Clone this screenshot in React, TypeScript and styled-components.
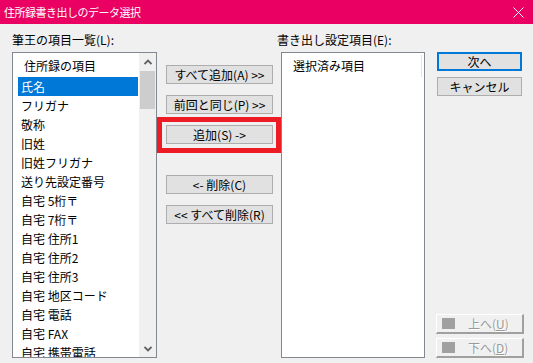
import React from "react";
import styled, { createGlobalStyle } from "styled-components";

const GlobalStyle = createGlobalStyle`
  html, body { margin: 0; padding: 0; background: #f0f0f0; overflow: hidden; }
  * { box-sizing: border-box; }
  body { font-family: "Noto Sans CJK JP", "Noto Sans", sans-serif; }
`;

const Window = styled.div`
  width: 533px;
  height: 363px;
  background: #f0f0f0;
  display: flex;
  flex-direction: column;
  font-family: "Noto Sans CJK JP", "Noto Sans", sans-serif;
  font-size: 12px;
  color: #000;
`;

const TitleBar = styled.div`
  height: 24px;
  background: #ea0062;
  display: flex;
  align-items: center;
  justify-content: space-between;
  padding: 0 9px 0 4px;
`;

const Title = styled.span`
  color: #fff;
  font-size: 11px;
  letter-spacing: -0.5px;
  line-height: 24px;
`;

const Body = styled.div`
  display: grid;
  grid-template-columns: 145px 124px 144px 99px;
  grid-template-rows: 28px 306px;
  padding: 0 9px 5px 12px;
`;

const FieldLabel = styled.div<{ $shift?: number }>`
  padding-top: 8px;
  line-height: 16px;
  font-size: 12px;
  white-space: nowrap;
  margin-left: ${(p) => p.$shift ?? 0}px;
`;

const ListBox = styled.div<{ $ghost?: boolean }>`
  position: relative;
  height: 306px;
  border: 1px solid #828790;
  background: #fff;
  display: flex;
  overflow: hidden;
  &::after {
    content: "";
    display: ${(p) => (p.$ghost ? "block" : "none")};
    position: absolute;
    right: 2px;
    top: 2px;
    width: 1px;
    height: 22px;
    background: #e3e3e3;
  }
`;

const Items = styled.div<{ $inset: number }>`
  flex: 1;
  min-width: 0;
  padding: 3px 1px 0 ${(p) => p.$inset}px;
  overflow: hidden;
`;

const Row = styled.div<{ $selected?: boolean; $header?: boolean }>`
  height: 19px;
  line-height: 19px;
  padding-left: ${(p) => (p.$header ? 6 : 3)}px;
  margin-bottom: ${(p) => (p.$header ? 2 : 0)}px;
  white-space: nowrap;
  background: ${(p) => (p.$selected ? "#0078d7" : "transparent")};
  color: ${(p) => (p.$selected ? "#fff" : "#000")};
`;

const ScrollBar = styled.div`
  width: 17px;
  background: #f0f0f0;
  display: flex;
  flex-direction: column;
`;

const ArrowButton = styled.div`
  height: 17px;
  display: flex;
  align-items: center;
  justify-content: center;
`;

const Thumb = styled.div`
  height: 38px;
  margin: 1px 1px 0;
  background: #cdcdcd;
`;

const Track = styled.div`
  flex: 1;
`;

const MidColumn = styled.div`
  display: flex;
  flex-direction: column;
  align-items: flex-start;
  padding-top: 13px;
`;

const ActionButton = styled.div<{ $gap?: number }>`
  width: 107px;
  height: 19px;
  margin-left: 9px;
  margin-top: ${(p) => p.$gap ?? 0}px;
  border: 1px solid #adadad;
  background: #e1e1e1;
  text-align: center;
  line-height: 17px;
  font-size: 12px;
  white-space: nowrap;
`;

const HighlightBox = styled.div`
  width: 124px;
  margin-top: 3px;
  border: 5px solid #ed1c24;
  padding: 3px 3px 4px 4px;
  & > div {
    margin-left: 0;
  }
`;

const SideColumn = styled.div`
  display: flex;
  flex-direction: column;
  justify-content: space-between;
  padding-left: 11px;
  height: 306px;
`;

const Group = styled.div<{ $gap: number }>`
  display: flex;
  flex-direction: column;
  gap: ${(p) => p.$gap}px;
`;

const DialogButton = styled.div<{ $primary?: boolean }>`
  width: 85px;
  height: 19px;
  margin-left: 1px;
  border: ${(p) => (p.$primary ? "2px solid #0078d7" : "1px solid #adadad")};
  background: #e1e1e1;
  text-align: center;
  line-height: ${(p) => (p.$primary ? 15 : 17)}px;
  font-size: 12px;
`;

const MoveButton = styled.div`
  width: 88px;
  height: 20px;
  background: #f0f0f0;
  border-top: 1px solid #ffffff;
  border-left: 1px solid #ffffff;
  border-right: 2px solid #a0a0a0;
  border-bottom: 2px solid #a0a0a0;
  display: flex;
  align-items: center;
  padding-left: 5px;
`;

const MoveIcon = styled.span`
  width: 13px;
  height: 11px;
  background: #a0a0a0;
  flex: none;
`;

const MoveText = styled.span`
  margin-left: 13px;
  color: #9a9a9a;
  font-size: 12px;
  line-height: 16px;
  text-shadow: 1px 1px 0 #ffffff;
  u { text-decoration: underline; }
`;

const Chevron = ({ up }: { up?: boolean }) => (
  <svg width="8" height="6" viewBox="0 0 8 6">
    <polyline
      points={up ? "0.5,5 4,1.5 7.5,5" : "0.5,1 4,4.5 7.5,1"}
      fill="none"
      stroke="#606060"
      strokeWidth="1.8"
    />
  </svg>
);

const CloseIcon = () => (
  <svg width="11" height="11" viewBox="0 0 11 11">
    <path d="M0.5 0.5 L10.5 10.5 M10.5 0.5 L0.5 10.5" stroke="#fff" strokeWidth="1" />
  </svg>
);

const fields = [
  "氏名",
  "フリガナ",
  "敬称",
  "旧姓",
  "旧姓フリガナ",
  "送り先設定番号",
  "自宅 5桁〒",
  "自宅 7桁〒",
  "自宅 住所1",
  "自宅 住所2",
  "自宅 住所3",
  "自宅 地区コード",
  "自宅 電話",
  "自宅 FAX",
  "自宅 携帯電話",
];

export default function App() {
  return (
    <>
      <GlobalStyle />
      <Window>
        <TitleBar>
          <Title>住所録書き出しのデータ選択</Title>
          <CloseIcon />
        </TitleBar>
        <Body>
          <FieldLabel>筆王の項目一覧(L):</FieldLabel>
          <div />
          <FieldLabel $shift={-4}>書き出し設定項目(E):</FieldLabel>
          <div />

          <ListBox>
            <Items $inset={5}>
              <Row $header>住所録の項目</Row>
              {fields.map((f, i) => (
                <Row key={f} $selected={i === 0}>
                  {f}
                </Row>
              ))}
            </Items>
            <ScrollBar>
              <ArrowButton>
                <Chevron up />
              </ArrowButton>
              <Thumb />
              <Track />
              <ArrowButton>
                <Chevron />
              </ArrowButton>
            </ScrollBar>
          </ListBox>

          <MidColumn>
            <ActionButton>すべて追加(A) &gt;&gt;</ActionButton>
            <ActionButton $gap={11}>前回と同じ(P) &gt;&gt;</ActionButton>
            <HighlightBox>
              <ActionButton>追加(S) -&gt;</ActionButton>
            </HighlightBox>
            <ActionButton $gap={22}>&lt;- 削除(C)</ActionButton>
            <ActionButton $gap={11}>&lt;&lt; すべて削除(R)</ActionButton>
          </MidColumn>

          <ListBox $ghost>
            <Items $inset={5}>
              <Row $header>選択済み項目</Row>
            </Items>
          </ListBox>

          <SideColumn>
            <Group $gap={6}>
              <DialogButton $primary>次へ</DialogButton>
              <DialogButton>キャンセル</DialogButton>
            </Group>
            <Group $gap={4}>
              <MoveButton>
                <MoveIcon />
                <MoveText>
                  上へ(<u>U</u>)
                </MoveText>
              </MoveButton>
              <MoveButton>
                <MoveIcon />
                <MoveText>
                  下へ(<u>D</u>)
                </MoveText>
              </MoveButton>
            </Group>
          </SideColumn>
        </Body>
      </Window>
    </>
  );
}
